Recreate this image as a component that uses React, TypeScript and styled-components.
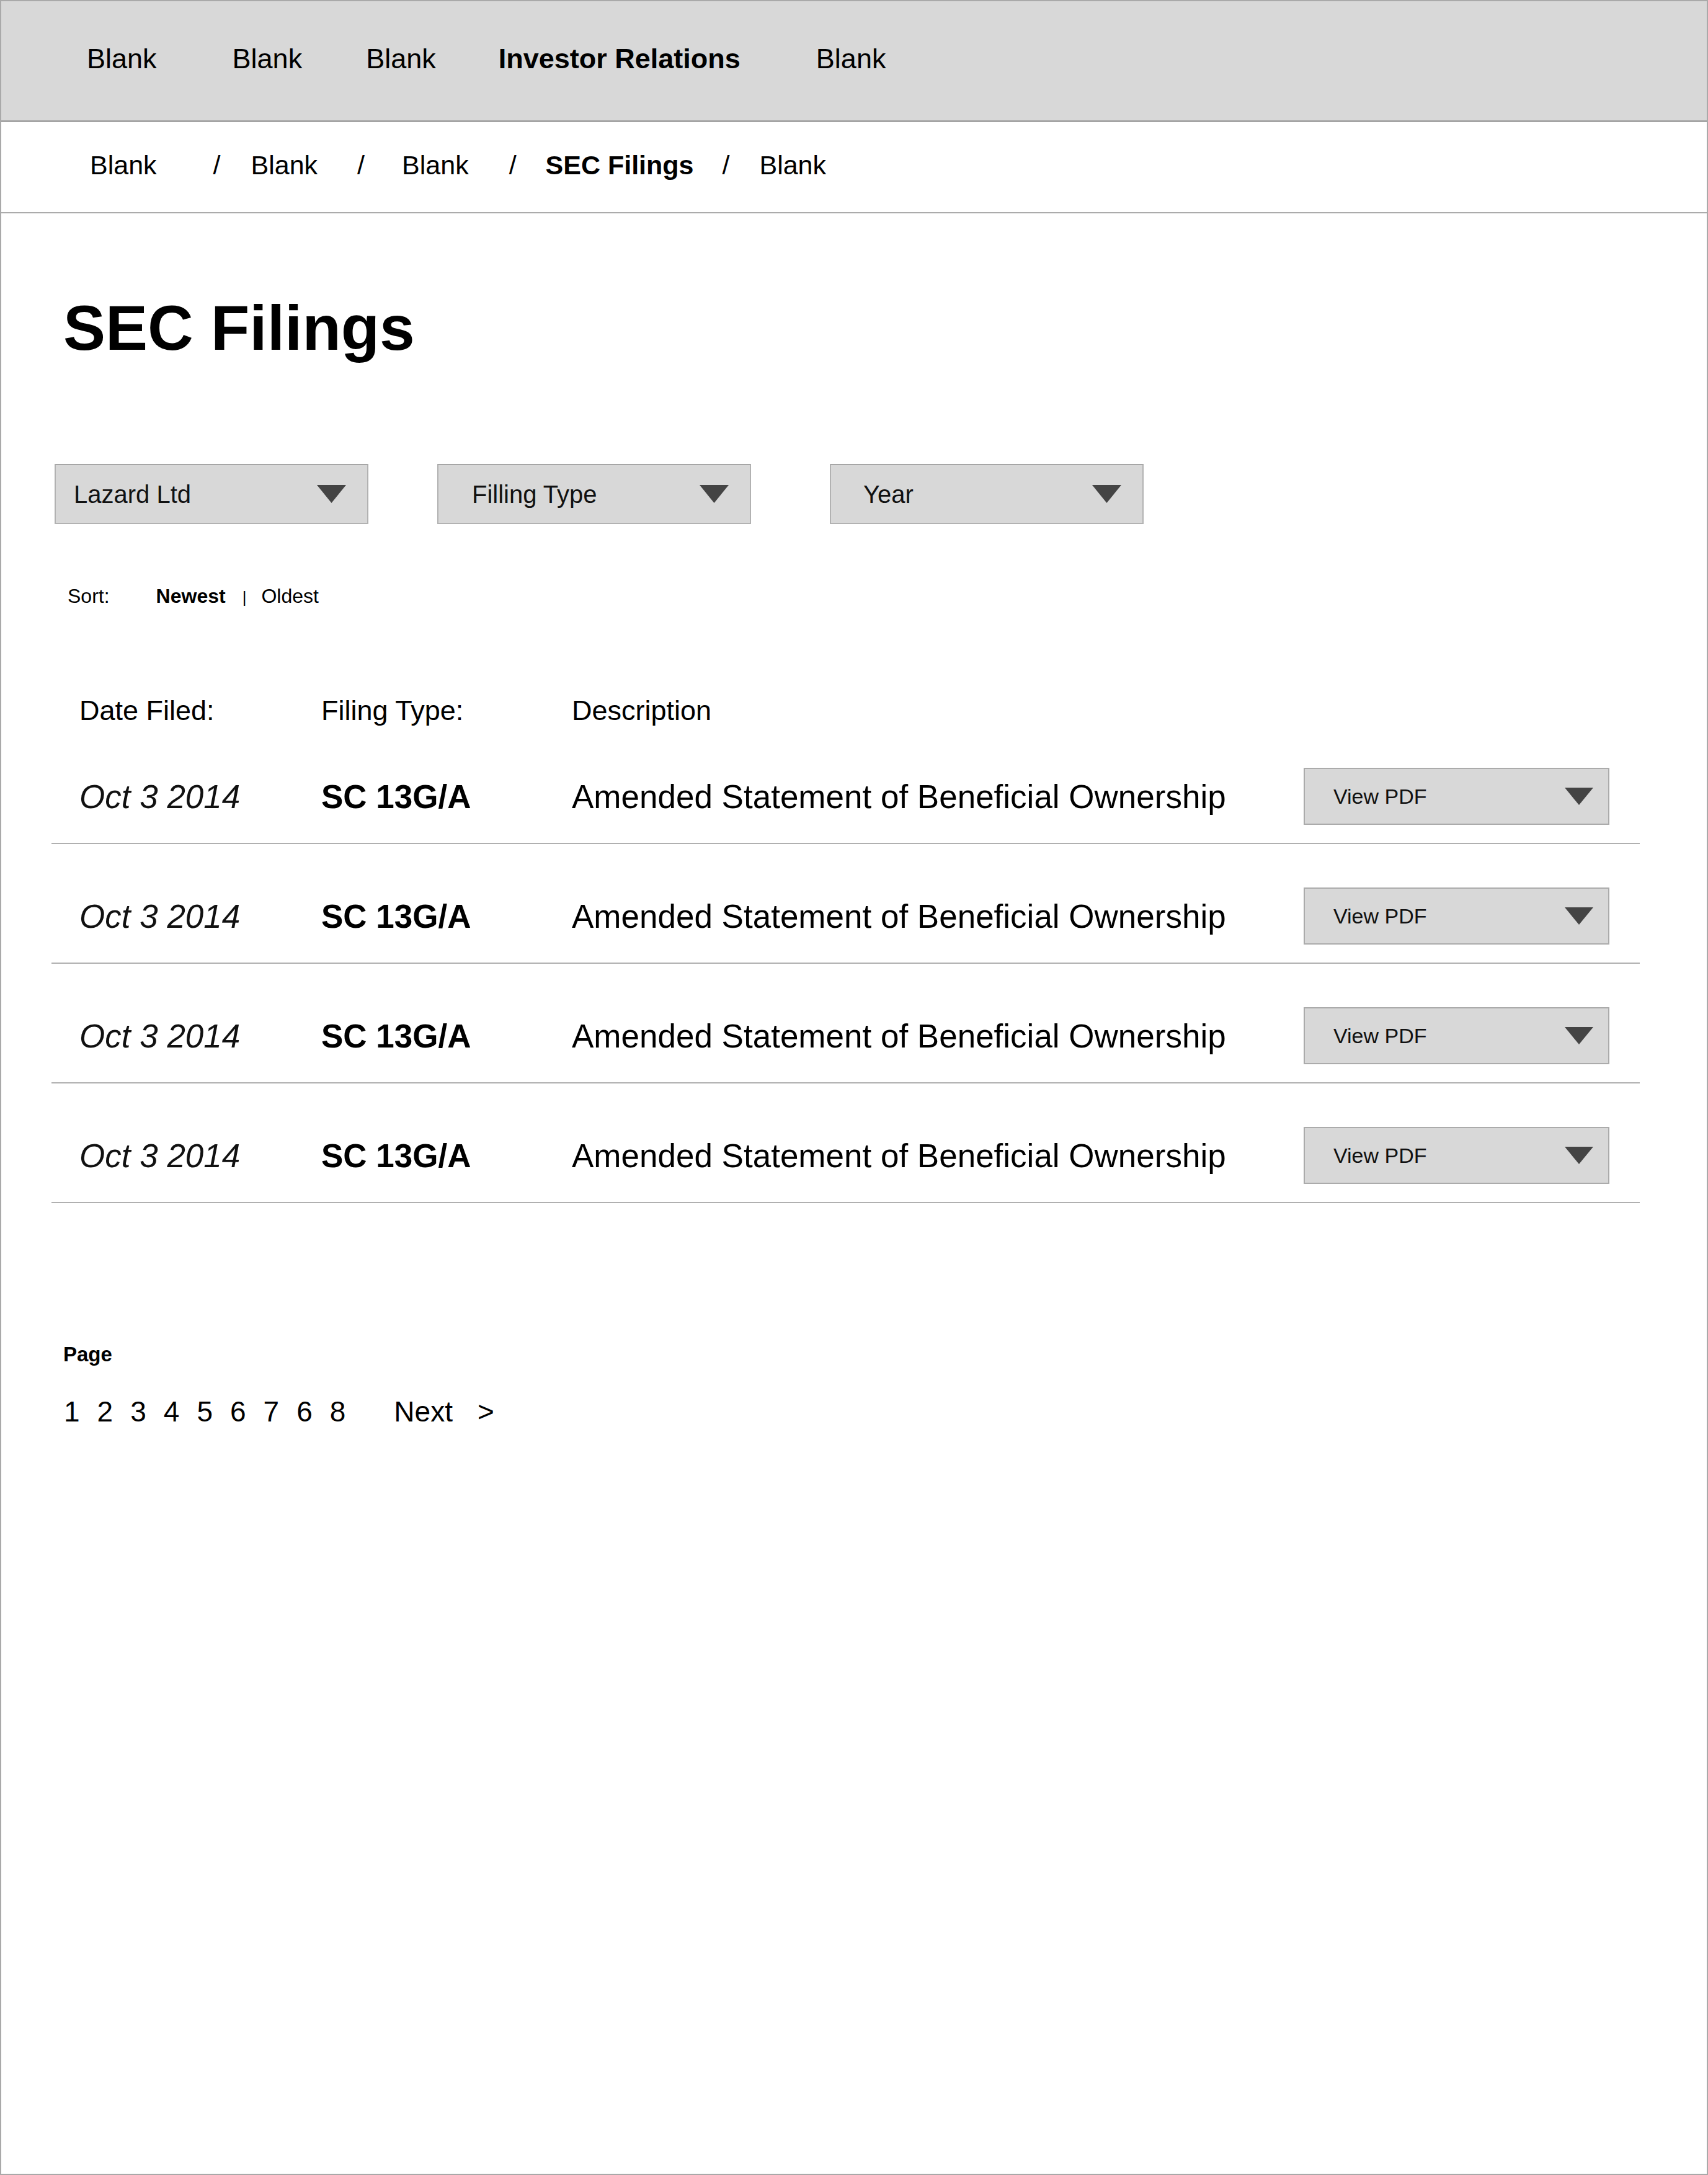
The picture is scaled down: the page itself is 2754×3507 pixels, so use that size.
import React from "react";
import styled, { createGlobalStyle } from "styled-components";

const Global = createGlobalStyle`
  html, body { margin: 0; padding: 0; background: #fff; }
  body { font-family: "Liberation Sans", Arial, Helvetica, sans-serif; color: #000; }
  * { box-sizing: border-box; }
`;

const Page = styled.div`
  width: 2754px;
  min-height: 3507px;
  border: 2px solid #a9a9a9;
  background: #fff;
  display: flex;
  flex-direction: column;
`;

const TopNav = styled.nav`
  height: 195px;
  background: #d8d8d8;
  border-bottom: 3px solid #a4a4a4;
  display: flex;
  align-items: center;
  padding-left: 138px;
  padding-bottom: 8px;
`;

const NavItem = styled.a<{ $ml?: number; $active?: boolean }>`
  font-size: 45px;
  line-height: 45px;
  font-weight: ${(p) => (p.$active ? 700 : 400)};
  margin-left: ${(p) => p.$ml ?? 0}px;
  color: #000;
  text-decoration: none;
  white-space: nowrap;
`;

const Breadcrumbs = styled.div`
  height: 147px;
  border-bottom: 2px solid #ababab;
  display: flex;
  align-items: center;
  padding-left: 143px;
  padding-bottom: 7px;
`;

const Crumb = styled.span<{ $ml?: number; $active?: boolean }>`
  font-size: 43px;
  line-height: 43px;
  font-weight: ${(p) => (p.$active ? 700 : 400)};
  margin-left: ${(p) => p.$ml ?? 0}px;
  white-space: nowrap;
`;

const Title = styled.h1`
  margin: 134px 0 0 100px;
  font-size: 102px;
  line-height: 102px;
  font-weight: 700;
`;

const Filters = styled.div`
  display: flex;
  align-items: center;
  margin: 168px 0 0 86px;
`;

const Select = styled.div<{ $ml?: number; $pl: number }>`
  width: 506px;
  height: 97px;
  margin-left: ${(p) => p.$ml ?? 0}px;
  background: #d8d8d8;
  border: 2px solid #b2b2b2;
  border-top-color: #a6a6a6;
  display: flex;
  align-items: center;
  justify-content: space-between;
  padding: 0 34px 0 ${(p) => p.$pl}px;
  font-size: 40px;
  line-height: 40px;
  color: #111;
`;

const Caret = ({ w, h }: { w: number; h: number }) => (
  <svg width={w} height={h} viewBox={`0 0 ${w} ${h}`} style={{ display: "block", flex: "none" }}>
    <polygon points={`0,0 ${w},0 ${w / 2},${h}`} fill="#444" />
  </svg>
);

const SortRow = styled.div`
  display: flex;
  align-items: center;
  margin: 100px 0 0 107px;
  font-size: 32px;
  line-height: 32px;
`;

const SortLabel = styled.span<{ $ml?: number; $bold?: boolean }>`
  margin-left: ${(p) => p.$ml ?? 0}px;
  font-weight: ${(p) => (p.$bold ? 700 : 400)};
`;

const SortSep = styled.span`
  margin-left: 27px;
  font-size: 26px;
  line-height: 26px;
  padding-top: 4px;
`;

const Table = styled.div`
  margin: 146px 0 0 81px;
  width: 2561px;
`;

const Grid = styled.div`
  display: grid;
  grid-template-columns: 390px 404px 1fr 493px;
  padding: 0 49px 0 45px;
  align-items: center;
`;

const HeadRow = styled(Grid)`
  font-size: 45px;
  line-height: 45px;
`;

const Row = styled(Grid)`
  padding-top: 70px;
  padding-bottom: 29px;
  border-bottom: 2px solid #b0b0b0;
  font-size: 53px;
  line-height: 53px;
`;

const DateCell = styled.span`
  font-style: italic;
  color: #111;
`;

const TypeCell = styled.span`
  font-weight: 700;
`;

const DescCell = styled.span`
  white-space: nowrap;
`;

const PdfButton = styled.div`
  height: 92px;
  background: #d8d8d8;
  border: 2px solid #ababab;
  display: flex;
  align-items: center;
  justify-content: space-between;
  padding: 0 24px 0 46px;
  font-size: 34px;
  line-height: 34px;
  color: #111;
`;

const PageLabel = styled.div`
  margin: 227px 0 0 100px;
  font-size: 33px;
  line-height: 33px;
  font-weight: 700;
`;

const Pager = styled.div`
  display: flex;
  align-items: center;
  margin: 53px 0 0 101px;
  font-size: 46px;
  line-height: 46px;
`;

const PageNum = styled.span<{ $ml?: number }>`
  margin-left: ${(p) => p.$ml ?? 0}px;
`;

const rows = Array.from({ length: 4 }, () => ({
  date: "Oct 3 2014",
  type: "SC 13G/A",
  desc: "Amended Statement of Beneficial Ownership",
}));

const pages = ["1", "2", "3", "4", "5", "6", "7", "6", "8"];

export default function App() {
  return (
    <>
      <Global />
      <Page>
        <TopNav>
          <NavItem>Blank</NavItem>
          <NavItem $ml={122}>Blank</NavItem>
          <NavItem $ml={103}>Blank</NavItem>
          <NavItem $ml={101} $active>
            Investor Relations
          </NavItem>
          <NavItem $ml={122}>Blank</NavItem>
        </TopNav>
        <Breadcrumbs>
          <Crumb>Blank</Crumb>
          <Crumb $ml={91}>/</Crumb>
          <Crumb $ml={49}>Blank</Crumb>
          <Crumb $ml={64}>/</Crumb>
          <Crumb $ml={60}>Blank</Crumb>
          <Crumb $ml={65}>/</Crumb>
          <Crumb $ml={47} $active>
            SEC Filings
          </Crumb>
          <Crumb $ml={46}>/</Crumb>
          <Crumb $ml={48}>Blank</Crumb>
        </Breadcrumbs>

        <Title>SEC Filings</Title>

        <Filters>
          <Select $pl={29}>
            <span>Lazard Ltd</span>
            <Caret w={47} h={29} />
          </Select>
          <Select $ml={111} $pl={54}>
            <span>Filling Type</span>
            <Caret w={47} h={29} />
          </Select>
          <Select $ml={127} $pl={52}>
            <span>Year</span>
            <Caret w={47} h={29} />
          </Select>
        </Filters>

        <SortRow>
          <SortLabel>Sort:</SortLabel>
          <SortLabel $ml={75} $bold>
            Newest
          </SortLabel>
          <SortSep>|</SortSep>
          <SortLabel $ml={24}>Oldest</SortLabel>
        </SortRow>

        <Table>
          <HeadRow>
            <span>Date Filed:</span>
            <span>Filing Type:</span>
            <span>Description</span>
            <span />
          </HeadRow>
          {rows.map((r, i) => (
            <Row key={i}>
              <DateCell>{r.date}</DateCell>
              <TypeCell>{r.type}</TypeCell>
              <DescCell>{r.desc}</DescCell>
              <PdfButton>
                <span>View PDF</span>
                <Caret w={46} h={28} />
              </PdfButton>
            </Row>
          ))}
        </Table>

        <PageLabel>Page</PageLabel>
        <Pager>
          {pages.map((n, i) => (
            <PageNum key={i} $ml={i === 0 ? 0 : 28}>
              {n}
            </PageNum>
          ))}
          <PageNum $ml={78}>Next</PageNum>
          <PageNum $ml={40}>&gt;</PageNum>
        </Pager>
      </Page>
    </>
  );
}
